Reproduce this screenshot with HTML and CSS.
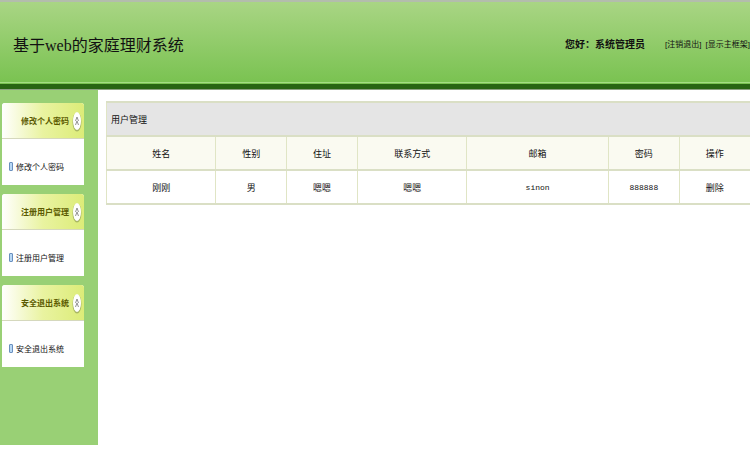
FILE: index.html
```
<!DOCTYPE html>
<html lang="zh-CN">
<head>
  <meta charset="UTF-8">
  <meta name="viewport" content="width=device-width, initial-scale=1.0">
  <title>基于web的家庭理财系统</title>
  <link rel="stylesheet" href="styles.css">
</head>
<body>
  <header class="top">
    <h1>基于web的家庭理财系统</h1>
    <strong class="hello">您好：系统管理员</strong>
    <nav class="top-links">
      <a href="#">[注销退出]</a>
      <a href="#">[显示主框架]</a>
    </nav>
  </header>

  <div class="page">
    <aside class="sidebar">
      <section class="menu">
        <h2>
          <span>修改个人密码</span>
          <svg class="arrow" viewBox="0 0 10 22"><ellipse cx="5" cy="12" rx="4.5" ry="9.5" fill="#a9b765"/><ellipse cx="5" cy="11" rx="4" ry="9" fill="#fff"/><path d="M3.500 11l1.500-4 1.500 4M3.500 15l1.500-4 1.500 4" fill="none" stroke="#777" stroke-width=".8"/></svg>
        </h2>
        <a href="#">修改个人密码</a>
      </section>
      <section class="menu">
        <h2>
          <span>注册用户管理</span>
          <svg class="arrow" viewBox="0 0 10 22"><ellipse cx="5" cy="12" rx="4.5" ry="9.5" fill="#a9b765"/><ellipse cx="5" cy="11" rx="4" ry="9" fill="#fff"/><path d="M3.500 11l1.500-4 1.500 4M3.500 15l1.500-4 1.500 4" fill="none" stroke="#777" stroke-width=".8"/></svg>
        </h2>
        <a href="#">注册用户管理</a>
      </section>
      <section class="menu">
        <h2>
          <span>安全退出系统</span>
          <svg class="arrow" viewBox="0 0 10 22"><ellipse cx="5" cy="12" rx="4.5" ry="9.5" fill="#a9b765"/><ellipse cx="5" cy="11" rx="4" ry="9" fill="#fff"/><path d="M3.500 11l1.500-4 1.500 4M3.500 15l1.500-4 1.500 4" fill="none" stroke="#777" stroke-width=".8"/></svg>
        </h2>
        <a href="#">安全退出系统</a>
      </section>
    </aside>

    <main>
      <table>
        <colgroup>
          <col class="col-m"><col class="col-s"><col class="col-s"><col class="col-m"><col class="col-l"><col class="col-s"><col class="col-s">
        </colgroup>
        <thead>
          <tr class="table-title">
            <th colspan="7">用户管理</th>
          </tr>
          <tr class="table-head">
            <th>姓名</th>
            <th>性别</th>
            <th>住址</th>
            <th>联系方式</th>
            <th>邮箱</th>
            <th>密码</th>
            <th>操作</th>
          </tr>
        </thead>
        <tbody>
          <tr>
            <td>刚刚</td>
            <td>男</td>
            <td>嗯嗯</td>
            <td>嗯嗯</td>
            <td class="mono">sinon</td>
            <td class="mono">888888</td>
            <td><a href="#">删除</a></td>
          </tr>
        </tbody>
      </table>
    </main>
  </div>
</body>
</html>
```
FILE: styles.css
```
* {
  box-sizing: border-box;
}

body {
  margin: 0;
  background: #fff;
  color: #111;
  font-family: "Liberation Sans", "Noto Sans CJK SC", sans-serif;
  font-size: 9px;
}

a {
  color: inherit;
  text-decoration: none;
}

/* header */
.top {
  display: flex;
  align-items: center;
  height: 90px;
  padding: 0 0 4px 13px;
  border-top: 2px solid #b3bdac;
  border-bottom: 1px solid #8d9f83;
  background: linear-gradient(#286413, #286413) bottom / 100% 5px no-repeat,
              linear-gradient(#a5dc84, #a5dc84) 0 80px / 100% 1px no-repeat,
              linear-gradient(#a9d584, #76c14d);
}

.top h1 {
  flex: 1;
  margin: 0;
  font-family: "Liberation Serif", "Noto Sans CJK SC", serif;
  font-size: 16px;
  font-weight: normal;
}

.hello {
  margin-right: 20px;
  font-size: 10px;
}

.top-links {
  display: flex;
  gap: 4px;
  font-size: 8px;
  white-space: nowrap;
}

.page {
  display: flex;
  min-height: calc(100vh - 95px);
}

/* left menu */
.sidebar {
  flex: 0 0 98px;
  display: flex;
  flex-direction: column;
  gap: 9px;
  padding: 13px 14px 0 2px;
  background: #99d075;
}

.menu {
  background: #fff;
  border-radius: 3px 3px 0 0;
}

.menu h2 {
  display: flex;
  align-items: center;
  justify-content: space-between;
  height: 36px;
  margin: 0;
  padding: 0 2px 0 19px;
  border-bottom: 1px solid #d5d8bd;
  border-radius: 3px 3px 0 0;
  background: linear-gradient(to right, #fff, #e9f3a0 50%, #dcec78);
  color: #5b5a00;
  font-size: 8px;
}

.arrow {
  width: 10px;
  height: 22px;
}

.menu a {
  display: flex;
  align-items: center;
  gap: 3px;
  height: 46px;
  padding: 8px 0 0 7px;
  font-size: 8px;
}

.menu a::before {
  content: "";
  box-sizing: border-box;
  width: 4px;
  height: 9px;
  border: 1px solid #6a8fbe;
  border-radius: 1px;
  background: #b8d8f5;
}

/* user table */
main {
  flex: 1;
  padding: 11px 0 0 8px;
}

table {
  width: 100%;
  table-layout: fixed;
  border-collapse: collapse;
  border-top: 2px solid #dadfc5;
  border-bottom: 2px solid #dadfc5;
}

.col-s {
  width: 11%;
}

.col-m {
  width: 17%;
}

.col-l {
  width: 22%;
}

th, td {
  height: 34px;
  padding: 0;
  border: 1px solid #e0e5c5;
  font-weight: normal;
  text-align: center;
}

tr > :last-child {
  border-right: none;
}

.table-title th {
  padding: 0 4px;
  background: #e5e5e5;
  text-align: left;
}

.table-head th {
  background: #fafaf1;
  border-top: 2px solid #dadfc5;
  border-bottom: 2px solid #dadfc5;
}

.mono {
  font-family: "Liberation Mono", monospace;
  font-size: 8px;
}
```
